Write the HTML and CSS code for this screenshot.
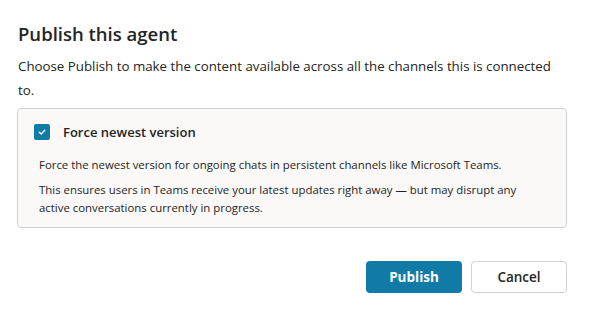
FILE: index.html
```html
<!DOCTYPE html>
<html lang="en">

<head>
  <meta charset="UTF-8" />
  <meta name="viewport" content="width=device-width, initial-scale=1.0" />
  <title>Publish this agent</title>
  <link rel="stylesheet" href="styles.css">
</head>

<body>
  <div class="dialog">
    <h1>Publish this agent</h1>
    <p class="intro">Choose Publish to make the content available across all the channels this is connected to.</p>

    <div class="option-box">
      <label class="check-row">
        <span class="checkbox">
          <svg width="10" height="10" viewBox="0 0 10 10">
            <path d="M2.3 5.2 L4.2 7 L7.8 3.2" fill="none" stroke="#ffffff" stroke-width="1.3" stroke-linecap="round" stroke-linejoin="round" />
          </svg>
        </span>
        <span class="check-label">Force newest version</span>
      </label>
      <div class="option-desc">
        <p>Force the newest version for ongoing chats in persistent channels like Microsoft Teams.</p>
        <p>This ensures users in Teams receive your latest updates right away — but may disrupt any active conversations currently in progress.</p>
      </div>
    </div>

    <div class="actions">
      <button class="btn btn-primary" type="button">Publish</button>
      <button class="btn btn-secondary" type="button">Cancel</button>
    </div>
  </div>
</body>

</html>
```

FILE: styles.css
```css
/* Global Styles */
* {
  box-sizing: border-box;
  margin: 0;
  padding: 0;
  font-family: "Open Sans", "Noto Sans", sans-serif;
}

body {
  background: #ffffff;
  color: #242424;
}

.dialog {
  width: 589px;
  padding: 20px 22px 0 17px;
}

h1 {
  font-size: 18.5px;
  font-weight: 600;
  line-height: 28px;
  padding-left: 1px;
  margin-bottom: 6px;
}

.intro {
  font-size: 13.3px;
  line-height: 24px;
  padding: 0 16px 0 1px;
  margin-bottom: 6px;
}

/* Option box */
.option-box {
  background: #faf9f8;
  border: 1px solid #d1d1d1;
  border-radius: 4px;
  padding: 13px 16px 10px 16px;
}

.check-row {
  display: flex;
  align-items: center;
  gap: 13px;
  height: 20px;
  margin-bottom: 14px;
}

.checkbox {
  width: 16px;
  height: 16px;
  border-radius: 2px;
  background: #0f7ba6;
  display: flex;
  align-items: center;
  justify-content: center;
}

.check-label {
  font-size: 13px;
  font-weight: 600;
  line-height: 20px;
}

.option-desc {
  padding: 0 22px 0 5px;
}

.option-desc p {
  font-size: 11.4px;
  line-height: 18px;
}

.option-desc p + p {
  margin-top: 7px;
}

/* Buttons */
.actions {
  display: flex;
  justify-content: flex-end;
  gap: 9px;
  margin-top: 33px;
}

.btn {
  width: 96px;
  height: 32px;
  border-radius: 4px;
  font-size: 13.5px;
  font-weight: 600;
  cursor: pointer;
}

.btn-primary {
  background: #0f7ba6;
  color: #ffffff;
  border: none;
  font-weight: 700;
}

.btn-secondary {
  background: #ffffff;
  color: #242424;
  border: 1px solid #d1d1d1;
}
```
